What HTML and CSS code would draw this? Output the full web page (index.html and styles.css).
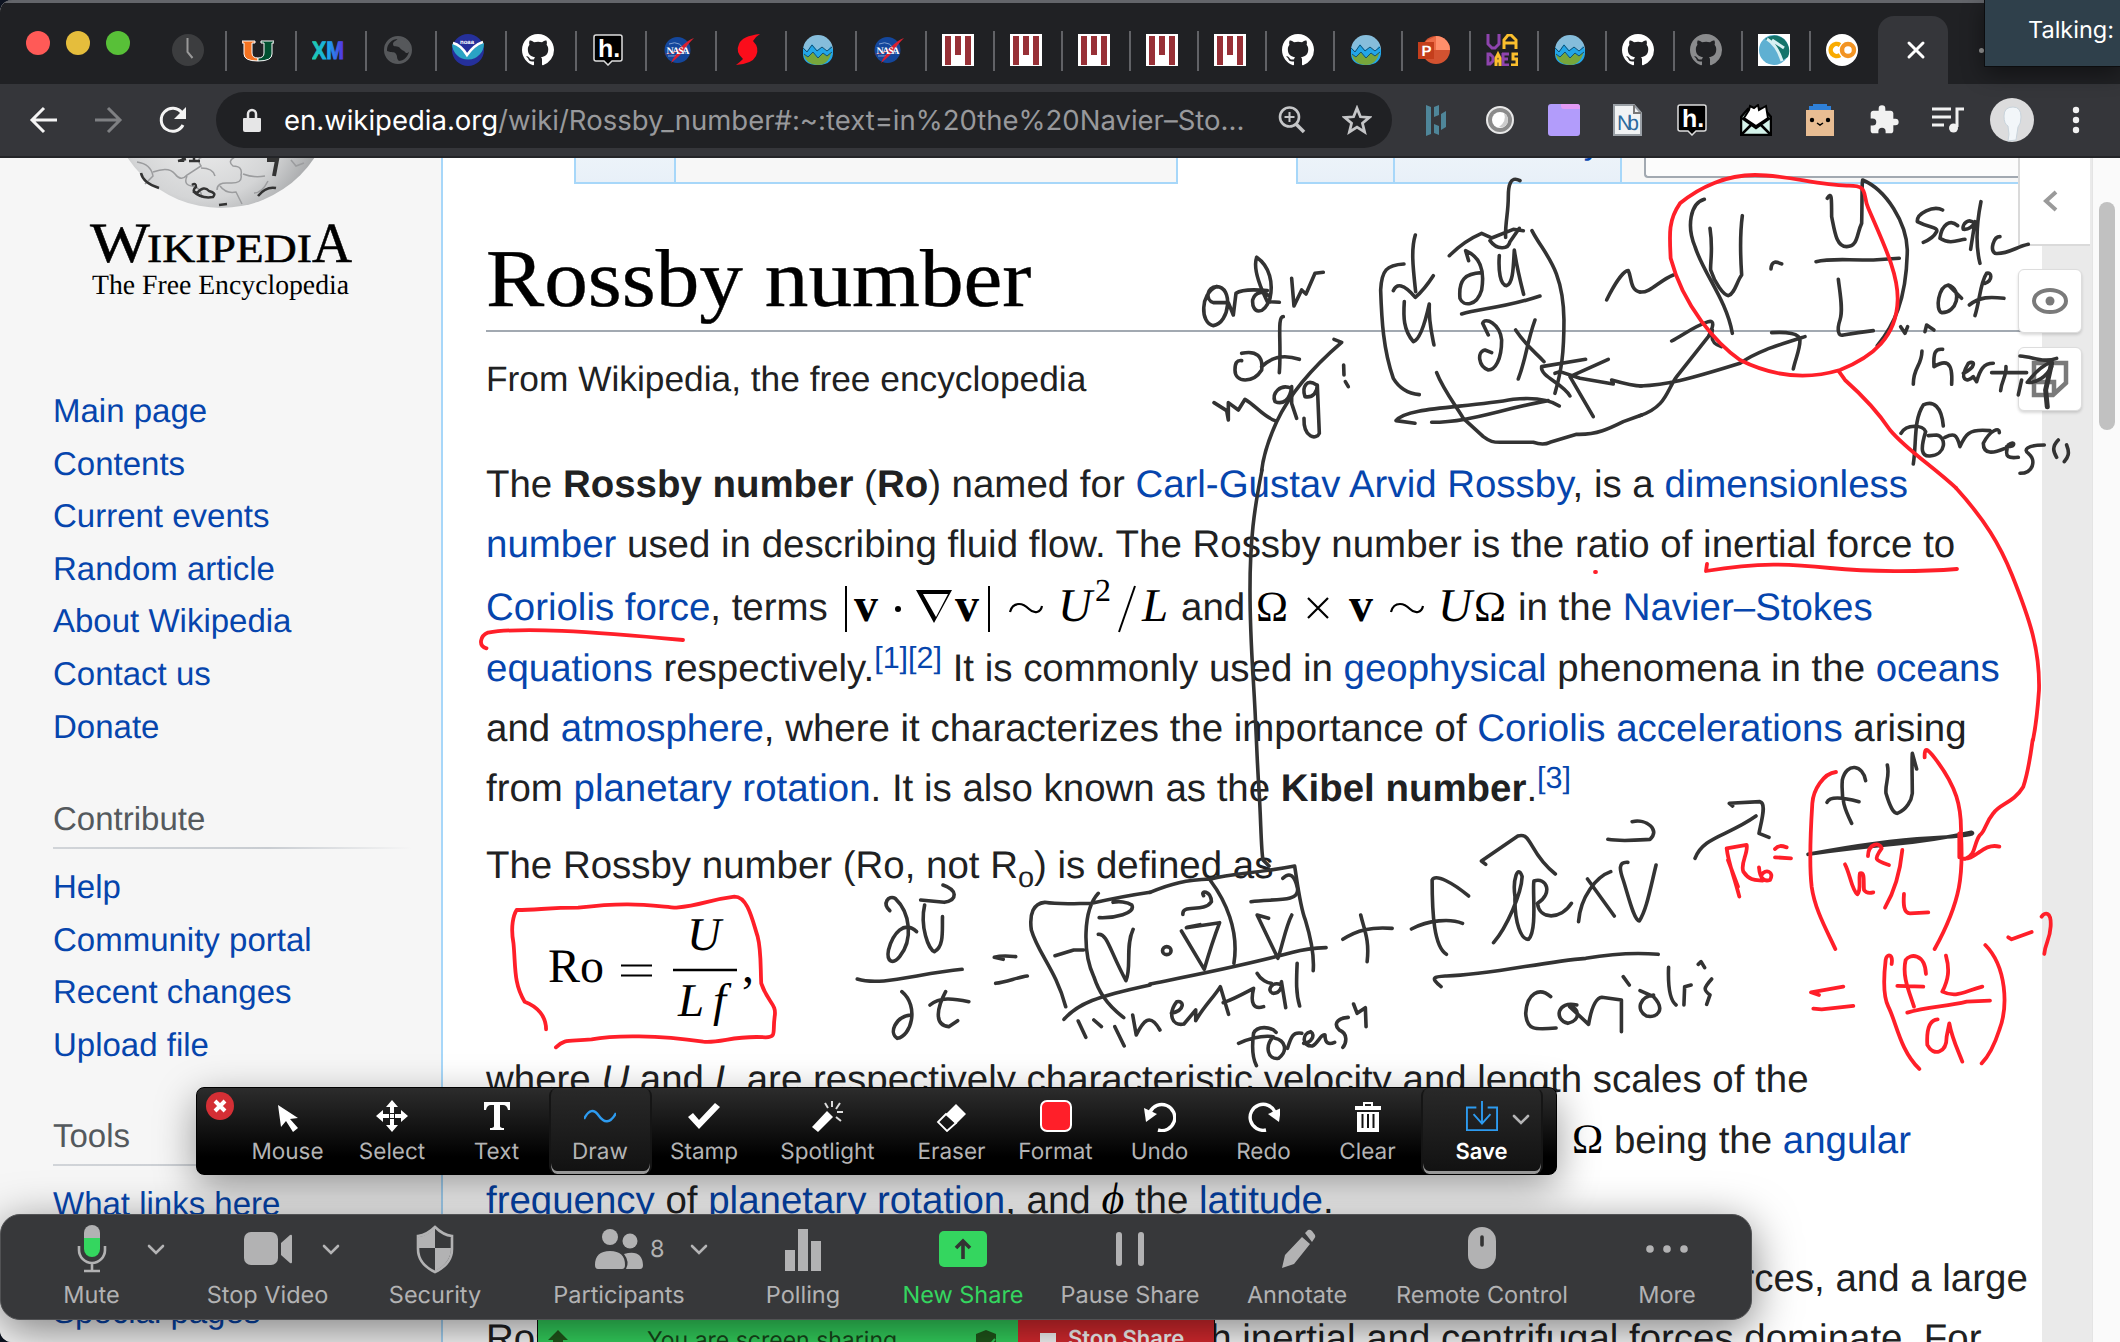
FILE: index.html
```html
<!DOCTYPE html>
<html lang="en">
<head>
<meta charset="utf-8">
<title>Rossby number - Wikipedia</title>
<link rel="stylesheet" href="styles.css">
</head>
<body>
<svg class="defs" width="0" height="0">
  <defs>
    <symbol id="github" viewBox="0 0 16 16"><path d="M8 0C3.58 0 0 3.58 0 8c0 3.54 2.29 6.53 5.47 7.59.4.07.55-.17.55-.38 0-.19-.01-.82-.01-1.49-2.01.37-2.53-.49-2.69-.94-.09-.23-.48-.94-.82-1.13-.28-.15-.68-.52-.01-.53.63-.01 1.08.58 1.23.82.72 1.21 1.87.87 2.33.66.07-.52.28-.87.51-1.07-1.78-.2-3.64-.89-3.64-3.95 0-.87.31-1.59.82-2.15-.08-.2-.36-1.02.08-2.12 0 0 .67-.21 2.2.82.64-.18 1.32-.27 2-.27s1.36.09 2 .27c1.53-1.04 2.2-.82 2.2-.82.44 1.1.16 1.92.08 2.12.51.56.82 1.27.82 2.15 0 3.07-1.87 3.75-3.65 3.95.29.25.54.73.54 1.48 0 1.07-.01 1.93-.01 2.2 0 .21.15.46.55.38A8.01 8.01 0 0 0 16 8c0-4.42-3.58-8-8-8z"/></symbol>
    <symbol id="nasa" viewBox="0 0 32 32"><circle cx="15.500" cy="16" r="13" fill="#14479c"/><path d="M7 10q12-5 17 10M6 22q14 2 20-13" fill="none" stroke="#7f9fd0" stroke-width="1"/><path d="M2 20q10 0 17-7T32 4q-7 7-10 12T9 29q3-8 12-15Q12 21 2 20z" fill="#d9202f"/><text x="16" y="20" font-family="Liberation Serif" font-weight="bold" font-size="10" fill="#fff" text-anchor="middle" textLength="23">NASA</text></symbol>
    <symbol id="earth" viewBox="0 0 32 32"><circle cx="16" cy="16" r="15" fill="#86bddb"/><path d="M1 18V13l4 4 5-7 5 6 5-3 5 4 4-5 2 4q1 15-15 15T1 18z" fill="#22a6e8"/><path d="M1.500 20l4 3 5-5 5 6 5-5 4 3 5-4q-3 13-14 13T1.500 20z" fill="#77a63b"/><path d="M1 14l4 4 5-7 5 6 5-4 5 4 5-4M2 20l4 3 5-5 5 6 5-5 4 3 5-4" fill="none" stroke="#17506f" stroke-width="1"/></symbol>
    <symbol id="miami" viewBox="0 0 32 32"><path d="M0 0h32v32H0z" fill="#fff"/><path d="M3 2h6v29H3zM13 2h6v19h-6zM23 2h6v29h-6z" fill="#983036"/></symbol>
    <symbol id="hyp" viewBox="0 0 32 32"><path d="M4 1h24q2 0 2 2v22q0 2-2 2h-8l-4 4-4-4H4q-2 0-2-2V3q0-2 2-2z" fill="#000" stroke="#ddd" stroke-width="1.500"/><text x="6" y="23" font-family="Liberation Sans" font-weight="bold" font-size="25" fill="#fff">h.</text></symbol>
    <symbol id="chev" viewBox="0 0 20 14"><path d="M3 3l7 7 7-7" fill="none" stroke="#b4b4b5" stroke-width="2.600" stroke-linecap="round"/></symbol>
  </defs>
</svg>

<div class="window">
  <header class="tabs">
    <div class="lights"><i class="red"></i><i class="yellow"></i><i class="green"></i></div>
    <div class="tab"><svg viewBox="0 0 32 32"><circle cx="16" cy="16" r="16" fill="#3c3d3f"/><path d="M15.500 4v14l5 6" fill="none" stroke="#999" stroke-width="2"/></svg></div>
    <div class="tab"><svg viewBox="0 0 32 32"><path d="M0 7h13v2h-3v10q0 5 6 5v3Q2 27 2 20V9H0z" fill="#f47321" stroke="#fff" stroke-width="1"/><path d="M19 7h13v2h-2v11q0 7-14 7v-3q6 0 6-5V9h-3z" fill="#005030" stroke="#fff" stroke-width="1"/></svg></div>
    <div class="tab"><svg viewBox="0 0 32 32"><linearGradient id="xm"><stop stop-color="#1fcfa9"/><stop offset=".5" stop-color="#18a8ef"/><stop offset="1" stop-color="#5a2be0"/></linearGradient><text x="0" y="25" textLength="32" lengthAdjust="spacingAndGlyphs" font-family="Liberation Sans" font-weight="bold" font-size="25" fill="url(#xm)" stroke="url(#xm)">XM</text></svg></div>
    <div class="tab"><svg viewBox="0 0 32 32"><circle cx="16" cy="16" r="12.500" fill="none" stroke="#56585b" stroke-width="3"/><path d="M5 17c5 2 7 0 9 3s0 4 3 7h-4Q5 25 4 17zM16 4c-1 3-5 3-5 6 0 4 5 1 7 4s4 2 5 4 3 1 5-1q0-12-12-13z" fill="#56585b"/></svg></div>
    <div class="tab"><svg viewBox="0 0 32 32"><circle cx="16" cy="16" r="16" fill="#25309b"/><path d="M0 10q8 0 15 12Q24 11 32 9a16 16 0 1 1-32 1z" fill="#2aa3c4"/><path d="M1 9q8 2 14 12Q22 11 31 8" fill="none" stroke="#fff" stroke-width="2.500"/><text x="8" y="10" font-size="6" font-family="Liberation Sans" fill="#fff" font-weight="bold">noaa</text></svg></div>
    <div class="tab"><svg fill="#fff"><use href="#github"/></svg></div>
    <div class="tab"><svg><use href="#hyp"/></svg></div>
    <div class="tab"><svg><use href="#nasa"/></svg></div>
    <div class="tab"><svg viewBox="0 0 32 32"><path d="M28 0Q10 2 7 10q-4 8 4 15-3 3-7 6 16-1 20-9 4-8-3-15 2-4 7-7z" fill="#fb0d1b"/></svg></div>
    <div class="tab"><svg><use href="#earth"/></svg></div>
    <div class="tab"><svg><use href="#nasa"/></svg></div>
    <div class="tab slim"><svg><use href="#miami"/></svg></div>
    <div class="tab slim"><svg><use href="#miami"/></svg></div>
    <div class="tab slim"><svg><use href="#miami"/></svg></div>
    <div class="tab slim"><svg><use href="#miami"/></svg></div>
    <div class="tab slim"><svg><use href="#miami"/></svg></div>
    <div class="tab slim"><svg fill="#fff"><use href="#github"/></svg></div>
    <div class="tab slim"><svg><use href="#earth"/></svg></div>
    <div class="tab slim"><svg viewBox="0 0 32 32"><circle cx="18" cy="16" r="14" fill="#d35230"/><path d="M18 2a14 14 0 0 1 14 14H18z" fill="#ff8f6b"/><path d="M18 2v14H8V7z" fill="#ed6c47"/><path d="M0 8h16v17H0z" fill="#c43e1c"/><text x="3.500" y="22" font-size="15" font-weight="bold" font-family="Liberation Sans" fill="#fff">P</text></svg></div>
    <div class="tab slim"><svg viewBox="0 0 32 32" fill="none" stroke-width="3"><path d="M2 0v10l4 4h3l4-4V0M2 20v10h2l3-3v-4l-3-3zM16 20h7M17 19v12h6M16 25h6" stroke="#8e44ad"/><path d="M18 15V6l4-5h3l5 5v9M18 9h12M10 32V24l2-4 2 4v8M10 27h4M32 20h-5v5h4v6h-6" stroke="#fbbf2d"/></svg></div>
    <div class="tab slim"><svg><use href="#earth"/></svg></div>
    <div class="tab slim"><svg fill="#fff"><use href="#github"/></svg></div>
    <div class="tab slim"><svg fill="#8a8b8d"><use href="#github"/></svg></div>
    <div class="tab slim"><svg viewBox="0 0 32 32"><path d="M0 0h32v32H0z" fill="#fff"/><circle cx="16" cy="16" r="15" fill="#5fb0d2"/><path d="M7 5Q16-2 26 5q8 9 4 18l-5 3Q20 12 7 5z" fill="#14746b"/><path d="M9 5q10 6 15 22M14 6l12 8" stroke="#d8f0f2" stroke-width="3" fill="none"/></svg></div>
    <div class="tab slim last"><svg viewBox="0 0 32 32"><circle cx="16" cy="16" r="16" fill="#fff"/><g fill="none" stroke-width="4.500"><path d="M14 11a6 6 0 1 0 0 10" stroke="#f9ab00"/><circle cx="22" cy="16" r="6" stroke="#f29423"/></g></svg></div>
    <div class="tab active"><svg viewBox="0 0 32 32"><path d="M9 9l14 14M23 9L9 23" stroke="#fff" stroke-width="3" stroke-linecap="round"/></svg></div>
    <i class="peek"></i>
  </header>

  <div class="toolbar">
    <div class="nav">
      <svg viewBox="0 0 32 32"><path d="M29 16H5M16 4L4 16l12 12" stroke="#f4f4f4"/></svg>
      <svg viewBox="0 0 32 32"><path d="M3 16h24M16 4l12 12-12 12" stroke="#7f8083"/></svg>
      <svg viewBox="0 0 32 32"><path d="M27 21A11.500 11.500 0 1 1 26 9" stroke="#f4f4f4"/><path d="M30 3v12H18z" fill="#f4f4f4"/></svg>
    </div>
    <div class="omnibox">
      <svg class="lock" viewBox="0 0 18 24"><path d="M1 10h16q1 0 1 1v11q0 2-2 2H2q-2 0-2-2V11q0-1 1-1z" fill="#e6e6e7"/><path d="M5 11V6a4 4 0 0 1 8 0v5" fill="none" stroke="#e6e6e7" stroke-width="2.500"/></svg>
      <span class="url"><b>en.wikipedia.org</b>/wiki/Rossby_number#:~:text=in%20the%20Navier–Sto...</span>
      <svg class="mag" viewBox="0 0 28 28" fill="none" stroke="#c4c5c7"><circle cx="11.500" cy="11" r="9.500" stroke-width="2.600"/><path d="M18 18l8 8" stroke-width="3.600"/><path d="M11.500 6v10M6.500 11h10" stroke-width="2"/></svg>
      <svg class="star" viewBox="0 0 28 28"><path d="M14 3l3.200 8 8.300.6-6.400 5.400 2 8.200-7.100-4.500-7.100 4.500 2-8.200-6.400-5.400 8.300-.6z" fill="none" stroke="#c4c5c7" stroke-width="2.600"/></svg>
    </div>
    <div class="exts">
      <svg viewBox="0 0 32 32" fill="#4f8699"><path d="M6 1l5 2v27l-5 2zM14 3l5-2v10l-5 2zM14 20l5 2v9l-5-2zM21 10l5-3v16l-5 3z"/></svg>
      <svg viewBox="0 0 32 32"><circle cx="16" cy="16" r="13" fill="#8b8b8b" stroke="#e8e8e8" stroke-width="2"/><circle cx="16" cy="16" r="8" fill="#fff"/><path d="M20 9q3 8-5 14 8 1 9-6 0-6-4-8z" fill="#ccc"/></svg>
      <svg viewBox="0 0 32 32"><rect width="32" height="32" rx="3" fill="#b29cfb"/><path d="M13 0h16q3 0 3 3v2H16q-3 0-3-3z" fill="#e39af5"/></svg>
      <svg viewBox="0 0 32 32"><path d="M2 1h20l7 8v22H2z" fill="#f1f3f4" stroke="#9aa0a6" stroke-width="2"/><path d="M22 1v8h7" fill="none" stroke="#777" stroke-width="2"/><text x="5" y="26" font-size="21" font-family="Liberation Sans" fill="#2d6b9e" textLength="22">Nb</text></svg>
      <svg><use href="#hyp"/></svg>
      <svg viewBox="0 0 32 32"><path d="M1 13L8 5h16l7 8v18H1z" fill="#d4f3ea" stroke="#000" stroke-width="2.500"/><path d="M4 14L9 6l1-4 4 2 4-3 1 5 7-4 2 12-12 8z" fill="#fff" stroke="#000" stroke-width="2"/><path d="M2 14l14 10 14-10M2 30l10-10M30 30L20 20" fill="none" stroke="#000" stroke-width="2.500"/></svg>
      <svg viewBox="0 0 32 32"><path d="M2 6h28v26H2z" fill="#e8bd93"/><path d="M9 0h14v2h4v4H5V2h4z" fill="#2f80d8"/><circle cx="8" cy="16" r="2.200"/><circle cx="24" cy="16" r="2.200"/><path d="M13 19l3 2 3-2" fill="none" stroke="#000" stroke-width="1.500"/></svg>
      <svg viewBox="0 0 24 24"><path d="M20.500 11H19V7c0-1.100-.9-2-2-2h-4V3.500a2.500 2.500 0 0 0-5 0V5H4c-1.100 0-2 .9-2 2v3.800h1.500a2.700 2.700 0 0 1 0 5.400H2V20c0 1.100.9 2 2 2h3.800v-1.500a2.700 2.700 0 0 1 5.400 0V22H17c1.100 0 2-.9 2-2v-4h1.500a2.500 2.500 0 0 0 0-5z" fill="#f1f1f1"/></svg>
      <svg viewBox="0 0 32 32"><path d="M0 5h19M0 13h19M0 21h12" stroke="#f1f1f1" stroke-width="3"/><path d="M25 23V5h7" fill="none" stroke="#f1f1f1" stroke-width="3"/><circle cx="21.500" cy="24" r="4.500" fill="#f1f1f1"/></svg>
      <svg class="avatar" viewBox="0 0 44 44"><circle cx="22" cy="22" r="22" fill="#dcdcdd"/><path d="M14 18q0-9 9-9 8 0 8 10 0 7-3 10l-2 13-8 1q2-6 0-15-4-2-4-10z" fill="#f2f6f9" stroke="#c9d4dc"/></svg>
      <svg viewBox="0 0 32 32" fill="#f1f1f1"><circle cx="16" cy="6" r="3.200"/><circle cx="16" cy="16" r="3.200"/><circle cx="16" cy="26" r="3.200"/></svg>
    </div>
  </div>

  <div class="page">
    <aside class="side">
      <svg class="logo" width="441" height="154" viewBox="0 158 441 154">
        <defs><radialGradient id="gl" cx=".42" cy=".6" r=".6"><stop stop-color="#f4f4f4"/><stop offset=".6" stop-color="#d4d5d6"/><stop offset="1" stop-color="#929496"/></radialGradient></defs>
        <circle cx="221" cy="96" r="112" fill="url(#gl)"/>
        <g fill="none" stroke="#9b9c9e" stroke-width="1.500"><path d="M137 162q14 2 16 14l-8 8M153 172q16-6 22 2t12 1l14-9q-6-9 4-9M187 176q-4 9 5 10t10 12M201 168q12 0 14 8M217 190q0-8 12-7 14 1 12-8 2-9-8-9-6-5 2-9M243 174q10 4 22 2M220 186q6 8 16 6l6 12M268 181q-6 12-14 12M291 160l5 6 8-3"/></g>
        <g fill="none" stroke="#333" stroke-width="2.500"><path d="M178 161l8-2M183 158v4M189 161h11M194 158v3"/><path d="M267 160h10l-3 16" stroke-width="4"/><path d="M192 185q4-3 4 2-5 4 1 6 7-8 12-2 8 2 4 6-12 2-20-6M141 173q2 10 18 15M258 196q8-10 18-8M219 205l8-1"/></g>
        <g font-family="Liberation Serif" fill="#000" stroke="#000" stroke-width=".5">
          <text x="90" y="262" font-size="57" textLength="60" lengthAdjust="spacingAndGlyphs">W</text>
          <text x="147" y="262" font-size="40" textLength="165" lengthAdjust="spacingAndGlyphs">IKIPEDI</text>
          <text x="312" y="262" font-size="57" textLength="40" lengthAdjust="spacingAndGlyphs">A</text>
          <text x="92" y="294" font-size="28" textLength="257" lengthAdjust="spacingAndGlyphs" stroke="none">The Free Encyclopedia</text>
        </g>
      </svg>
      <nav class="links first"><a>Main page</a><a>Contents</a><a>Current events</a><a>Random article</a><a>About Wikipedia</a><a>Contact us</a><a>Donate</a></nav>
      <h3>Contribute</h3>
      <nav class="links"><a>Help</a><a>Community portal</a><a>Recent changes</a><a>Upload file</a></nav>
      <h3>Tools</h3>
      <nav class="links tools"><a>What links here</a><a>Special pages</a></nav>
    </aside>

    <main class="content">
      <div class="wikitabs"><i class="blue talk"></i><i class="gap"></i><i class="sel"></i><i class="blue edit"></i><i class="blue hist"><span>View history</span></i><i class="searchwrap"><span class="searchbox"></span></i></div>
      <h1><span>Rossby number</span></h1>
      <p class="sub">From Wikipedia, the free encyclopedia</p>
      <div class="para p1">
        <div>The <b>Rossby number</b> (<b>Ro</b>) named for <a>Carl-Gustav Arvid Rossby</a>, is a <a>dimensionless</a></div>
        <div><a>number</a> used in describing fluid flow. The Rossby number is the ratio of inertial force to</div>
        <div class="mathline"><span class="w1"><a>Coriolis force</a>, terms</span><svg width="337" height="60" class="mathsvg"><g><path d="M2 8v46M145 8v46" stroke="#000" stroke-width="2"/><text x="10" y="43" class="up">v</text><circle cx="54" cy="31" r="3"/><path d="M72 12h36L90 45zM79 16h25L92 39z" fill-rule="evenodd"/><text x="111" y="43" class="up">v</text><path d="M166 34q2-8 9-8 5 0 10 5 4 4 8 3 4-1 5-6" class="til"/><text x="214" y="43">U</text><text x="251" y="23" class="exp">2</text><path d="M275 54L291 8" stroke="#000" stroke-width="2"/><text x="298" y="43">L</text></g></svg><span class="w2">and</span><svg width="272" height="60" class="mathsvg"><g><text x="10" y="43" class="rm">Ω</text><path d="M62 20l20 20M82 20L62 40" stroke="#000" stroke-width="2.200"/><text x="103" y="43" class="up">v</text><path d="M145 34q2-8 9-8 5 0 10 5 4 4 8 3 4-1 5-6" class="til"/><text x="192" y="43">U</text><text x="228" y="43" class="rm">Ω</text></g></svg><span>in the <a>Navier–Stokes</a></span></div>
        <div><a>equations</a> respectively.<sup><a>[1][2]</a></sup> It is commonly used in <a>geophysical</a> phenomena in the <a>oceans</a></div>
        <div>and <a>atmosphere</a>, where it characterizes the importance of <a>Coriolis accelerations</a> arising</div>
        <div>from <a>planetary rotation</a>. It is also known as the <b>Kibel number</b>.<sup><a>[3]</a></sup></div>
      </div>
      <div class="para p2"><div>The Rossby number (Ro, not R<sub>o</sub>) is defined as</div></div>
      <svg class="formula" width="300" height="130" viewBox="530 905 300 130"><g class="mathsvg"><text x="548" y="983" class="ro" textLength="56" lengthAdjust="spacingAndGlyphs">Ro</text><path d="M621 966.500h31M621 976.500h31" stroke="#000" stroke-width="2"/><path d="M673 971h64" stroke="#000" stroke-width="2.600"/><text x="687" y="951">U</text><text x="678" y="1017">L</text><text x="713" y="1017">f</text><text x="742" y="983" class="ro">,</text></g></svg>
      <div class="para p3">
        <div>where <i>U</i> and <i>L</i> are respectively characteristic velocity and length scales of the</div>
        <div class="cut"><span class="om">Ω</span> being the <a>angular</a></div>
        <div><a>frequency</a> of <a>planetary rotation</a>, and <em>ϕ</em> the <a>latitude</a>.</div>
      </div>
      <div class="para p4">
        <div>A small Rossby number indicates a system strongly affected by Coriolis forces, and a large</div>
        <div>Rossby number indicates a system in which inertial and centrifugal forces dominate. For</div>
      </div>
    </main>
    <div class="scroll"><i></i></div>
  </div>
</div>

<div class="rail">
  <div class="fold"><svg viewBox="0 0 24 24" width="24" height="24"><path d="M17 3L7 12l10 9" fill="none" stroke="#9a9a9a" stroke-width="4"/></svg></div>
  <div class="rbtn"><svg width="38" height="28"><ellipse cx="19" cy="14" rx="16" ry="11" fill="none" stroke="#7a7a7a" stroke-width="4"/><circle cx="19" cy="14" r="4.500" fill="#7a7a7a"/></svg></div>
  <div class="rbtn"><svg width="38" height="38"><path d="M3 3h32v20L22 35H3zM3 22h20v12" fill="none" stroke="#7a7a7a" stroke-width="4.500"/></svg></div>
</div>

<svg class="ink" width="2120" height="1342">
  <g class="black">
    <path d="M1262 470C1254 510 1250 540 1250 590S1253 670 1255 710S1257 760 1259 790S1261 850 1263 860l6 6"/>
    <g transform="translate(1180 170) scale(.3333)">
      <path d="M110 350C60 370 60 460 100 467C150 460 160 350 110 350C80 350 75 390 100 398L145 398L160 435L168 370Q190 355 262 362"/>
      <path d="M230 262C220 290 235 340 262 395L298 397M230 262C270 290 280 340 270 385C250 440 215 430 218 390C225 365 250 360 270 380"/>
      <path d="M335 325L342 408L365 360L378 372L405 310L430 307"/>
      <path d="M185 550C230 540 250 560 245 600C220 640 165 640 165 600C165 580 170 570 185 572M245 590C280 555 320 555 358 568M310 440C290 440 305 520 298 608"/>
      <path d="M102 698L140 722L145 750V698L175 720L195 688C225 705 250 740 285 752"/>
      <path d="M335 655C300 640 275 670 285 695C310 705 330 690 335 650V700L350 745M410 645C380 625 365 650 375 680C400 685 412 665 412 645L418 790C410 810 370 805 372 745"/>
      <path d="M491 585L492 615M496 635L505 650"/>
      <path d="M462 508L485 517C400 590 330 670 290 755C265 810 250 860 245 902"/>
      <path d="M672 282C620 285 605 300 602 360C605 450 610 540 640 625C655 650 680 670 718 674"/>
      <path d="M706 195C692 240 700 300 707 365M640 362C650 340 670 340 706 382C720 370 745 340 760 317"/>
      <path d="M673 395C670 440 670 480 700 515C720 510 735 460 748 402C745 450 755 490 762 525"/>
      <path d="M808 257C840 225 870 205 905 190L935 204L1000 178L1030 182M930 212C950 240 985 240 990 215L1018 175M1020 32C990 15 985 50 985 80C985 130 975 160 977 202"/>
      <path d="M866 272L857 242C900 260 915 300 905 360C890 410 850 410 840 385C835 330 855 310 905 308"/>
      <path d="M958 257C955 300 960 345 980 347C1000 340 1000 290 1003 240C1010 290 1020 330 1031 373M845 432C900 415 970 415 1080 378"/>
      <path d="M925 495L908 460C915 440 960 460 965 510C965 570 945 600 925 600C895 590 890 545 915 540L935 548M1007 480C1040 530 1070 550 1092 575M1065 450C1040 520 1040 560 1015 627"/>
      <path d="M1056 182C1090 250 1150 290 1152 450C1152 550 1145 600 1125 670"/>
      <path d="M1217 568L1085 590C1080 620 1150 640 1170 678M1285 568L1170 620L1240 740M1125 610L1140 605L1200 625L1300 642L1295 630C1330 640 1360 648 1385 648"/>
      <path d="M770 608C790 660 830 710 850 745L910 800C930 815 940 817 960 817H1060Q1090 827 1110 817L1190 793C1250 795 1290 775 1330 755L1385 735"/>
      <path d="M705 760L648 752C680 710 850 715 1000 688C1060 682 1110 690 1138 708M755 757C870 757 950 720 1105 692"/>
      <path d="M1280 390C1300 350 1330 300 1345 302C1355 320 1350 362 1380 366"/>
    </g>
    <g transform="translate(1640 150) scale(.3333)">
      <path d="M0 426C30 430 60 390 100 375M0 708C80 705 140 690 300 640C350 605 400 590 495 560M395 548C440 545 480 550 480 570C480 600 465 630 460 657M0 797C80 770 80 720 110 680L205 560C220 530 225 510 205 515C160 530 130 555 95 573M217 540C210 575 225 585 245 590"/>
      <path d="M193 148C150 160 140 230 165 290C190 370 260 450 277 550M210 235C220 300 210 340 212 360C225 400 250 435 265 437C285 430 290 395 305 375C300 300 300 250 307 197"/>
      <path d="M393 357C395 330 410 335 425 342M562 145C575 125 575 140 575 200C585 250 590 290 620 290C655 290 650 250 665 220C667 150 665 100 668 90C740 120 800 220 802 300C800 450 760 530 712 587"/>
      <path d="M528 335C570 325 600 330 700 330L778 325M595 388C600 430 610 480 600 510C590 540 595 560 610 555L655 548L700 542"/>
      <path d="M908 180C880 165 830 190 832 215C870 235 895 230 890 245Q880 265 850 277M953 227C930 205 905 225 900 265C930 285 955 270 975 268M1005 222C985 200 965 225 970 238C985 240 1000 230 1005 215L992 298M1023 155C1010 220 1005 280 1020 340M1080 260C1060 260 1050 300 1065 310C1100 315 1130 290 1165 283"/>
      <path d="M925 405C895 410 885 480 905 488C950 490 970 420 925 405L965 445M1035 400C1060 390 1055 365 1040 370C1020 400 1020 450 1005 497M988 465C1020 440 1050 440 1092 445"/>
      <path d="M782 530L795 550L803 530M855 545L860 525L882 540M846 603C845 650 820 650 820 703M908 598C885 595 880 610 882 650C915 630 940 630 935 703M970 670C1010 650 1005 630 985 640C955 690 980 700 1000 680L1010 695C1020 660 1030 640 1060 640M1098 650C1100 680 1085 690 1082 722M1055 668H1160M1145 690L1135 735"/>
      <path d="M1140 618C1180 620 1210 640 1250 625M1235 635C1200 650 1175 680 1162 697C1190 700 1220 680 1235 650"/>
      <path d="M1235 640L1217 720L1222 770" stroke-width="5"/>
      <path d="M910 828C905 770 880 750 850 765C820 810 830 880 820 942M783 850C800 820 850 825 857 845C840 900 845 920 870 918C920 915 920 860 890 855L865 857M915 862C940 850 950 850 960 890C975 855 985 835 1050 842M1078 848C1080 830 1050 840 1030 880C1030 915 1060 910 1095 895M1100 890C1130 890 1125 870 1105 885C1090 925 1110 925 1135 922M1213 885C1160 885 1150 900 1165 910C1190 930 1180 970 1140 970M1255 870C1235 890 1240 905 1250 922M1280 885C1290 910 1285 920 1273 935"/>
    </g>
    <g transform="translate(480 840) scale(.44643 .33333)">
      <path d="M918 212C900 190 915 165 930 175C965 220 970 300 940 350C925 375 910 365 915 330C925 280 950 240 978 275M996 195C985 260 1005 330 1018 335C1040 320 1035 270 1036 230M987 180L1040 187C1070 180 1070 150 1037 135M845 417C900 440 980 400 1080 388"/>
      <path d="M945 455C985 500 965 590 935 595C915 580 930 530 965 525M1043 455C1025 500 1015 555 1050 560L1070 542M1008 495C1030 470 1060 475 1095 485M1172 358L1152 352C1170 345 1185 348 1200 350M1155 430C1180 425 1205 412 1226 408"/>
      <path d="M1312 500C1290 390 1250 340 1235 270C1230 220 1240 190 1265 187C1300 195 1340 190 1370 190C1420 175 1460 165 1501 157M1288 347L1330 330H1352M1385 160C1350 210 1350 340 1375 410C1385 450 1400 490 1442 533M1385 283C1405 280 1410 330 1447 422C1460 380 1445 320 1463 268M1387 233C1420 235 1470 220 1460 195C1450 185 1430 183 1418 187"/>
      <path d="M1308 538C1340 490 1380 470 1501 435M1340 543L1357 592M1375 540L1392 560M1422 560L1443 618M1462 525L1470 585C1485 545 1500 515 1523 570"/>
    </g>
    <g transform="translate(1150 780) scale(.35714 .33333)">
      <path d="M0 337C60 310 100 300 170 297C230 280 300 280 405 258C410 290 420 380 435 420C455 490 460 530 457 572M170 303C210 360 250 450 235 550M92 403C90 370 150 400 172 365C170 330 140 330 150 347M102 443L195 428C180 470 165 520 152 568L88 453M104 442L140 434"/>
      <circle cx="47" cy="512" r="12"/>
      <path d="M332 415L300 405L358 535C370 500 380 440 397 405M283 365C340 355 420 370 413 325C405 285 390 275 372 295M0 612C150 580 250 560 400 517Q440 505 493 503"/>
      <path d="M60 700C100 690 95 660 75 665C50 700 60 740 95 732L128 690V722C150 680 180 650 197 620L220 703M205 668C240 655 280 630 290 625C280 670 290 690 318 680M300 580C310 600 330 610 340 610M368 615C340 600 325 635 345 640C365 640 370 620 368 605L380 683M412 550C410 600 408 640 419 678"/>
      <path d="M353 757C340 740 300 735 290 760C285 800 285 830 298 857M248 790C280 775 310 765 345 770C320 800 330 840 360 835C390 810 375 780 350 775M385 805C395 770 400 755 425 760M430 790C450 790 465 765 450 755C425 760 425 800 455 798C470 790 480 760 490 765C490 790 500 795 517 787M555 712C520 715 515 735 530 750C555 760 550 790 540 802M570 672L580 700L603 683L605 740"/>
      <path d="M590 405C600 450 615 480 608 545M540 478C580 450 620 440 678 445M892 348C850 310 800 280 790 300C790 400 795 500 830 523M732 447C780 420 840 415 875 430M940 253L928 243L1030 168C1070 155 1060 220 1135 282"/>
      <path d="M962 488C1000 440 1040 340 1042 290C1030 250 1015 300 1022 350C1020 430 1040 480 1060 478C1085 450 1070 330 1075 303C1110 290 1130 340 1085 370C1090 420 1150 420 1180 370M1225 297L1300 408M1290 275C1250 290 1205 350 1200 425M1338 247C1310 245 1315 270 1325 300C1340 350 1355 420 1370 423C1390 390 1400 330 1417 255M1282 178C1320 185 1370 180 1400 178C1430 150 1390 115 1350 125"/>
      <path d="M815 620C780 590 800 590 830 588C950 585 1100 545 1220 535C1300 520 1370 518 1423 523M1122 650C1090 620 1055 640 1052 700C1055 750 1075 750 1137 744M1195 675C1140 660 1130 720 1170 730C1210 720 1200 680 1175 680L1228 733C1235 690 1245 655 1265 652L1320 660V755M1325 590L1342 615M1372 632L1410 650C1445 690 1420 715 1390 708C1360 690 1370 650 1410 645M1452 562C1450 620 1455 660 1473 675M1495 675L1497 620L1515 615M1535 553L1543 545L1553 563"/>
    </g>
    <g transform="translate(1680 740) scale(.3333)">
      <path d="M95 717C70 745 70 750 90 765L80 793M45 355C70 290 140 290 228 228M158 198L148 190L240 185C260 190 245 240 237 280L267 292M557 122C550 75 500 65 487 120C483 180 495 210 515 250M441 187C450 165 500 175 537 185M622 75C630 110 615 130 618 160C630 200 640 220 652 220C680 210 695 180 697 160C697 110 695 70 697 40L710 87"/>
      <path d="M384 343Q600 302 750 294T874 277Q760 302 640 313T384 343z" fill="#333"/>
    </g>
  </g>
  <g class="redink">
    <path d="M1707 564l-1 7C1760 562 1790 564 1830 568S1920 572 1957 569M1595 572h1"/>
    <path d="M486.500 648.300C478 646 480 636 488 632.600C521 627 587 631 683 640"/>
    <path d="M1956 488C1985 520 2000 545 2012 575C2030 620 2040 650 2039 690Q2037 720 2033 740"/>
    <g transform="translate(1640 150) scale(.3333)"><path d="M120 160C180 110 260 75 345 75C440 75 530 105 620 107C690 105 665 130 685 175C730 280 775 370 773 450C770 560 700 620 600 660C500 690 400 680 300 630C230 580 130 470 92 325C88 250 85 210 120 160M595 662L615 690C660 730 710 780 750 840C800 900 880 950 948 1014"/></g>
    <g transform="translate(480 840) scale(.44643 .33333)"><path d="M148 568C148 530 130 500 100 485C75 430 80 380 75 310C68 260 75 225 82 210C130 210 150 203 220 203C330 185 370 195 440 203C500 195 510 180 570 170C600 170 610 240 622 290C630 330 628 380 630 430C645 490 665 490 660 530C655 580 665 590 640 592C570 585 540 610 500 605C400 585 300 585 250 598C200 605 190 595 170 622"/></g>
    <g transform="translate(1680 740) scale(.3333)">
      <path d="M178 470C160 400 145 370 140 325L200 315C205 340 180 370 190 395C210 425 230 420 248 422M144 360L174 440M237 382C240 420 255 425 270 420C285 395 255 385 245 405M285 327C295 315 305 317 320 322M285 352L333 355M468 96C430 100 400 150 397 190C390 300 388 380 395 440C405 510 440 570 466 627"/>
      <path d="M734 52C733 15 745 30 765 55C830 140 845 200 843 280C850 400 845 480 764 627M838 280V352M1058 0C1050 60 1040 110 1030 140C1000 190 960 190 940 220C915 250 915 275 900 285C880 310 890 345 855 357L845 355C870 360 885 345 900 335C920 320 940 315 958 320"/>
      <path d="M495 373C510 400 515 450 532 463C545 450 535 420 540 400C555 395 550 420 552 450Q560 462 580 457M564 348C565 310 600 305 605 325C580 360 585 360 627 375M667 330C660 400 640 460 615 503M672 462C670 490 670 520 690 520L745 517"/>
      <path d="M417 765L393 757L490 740M400 806L425 808L520 798M635 672C640 640 620 640 617 660C610 720 610 770 625 800C650 850 660 930 718 987M738 702C735 640 690 640 677 660C665 710 690 760 702 800M652 738L730 740M798 647C810 690 805 720 787 755C830 775 850 755 907 740M682 818C740 800 800 800 860 785L930 782M773 838C745 840 740 880 742 915C760 950 800 940 800 890L808 850C815 890 825 910 847 965"/>
      <path d="M916 615C980 680 985 800 958 870C945 910 925 950 905 970M985 592L995 598L1055 576M1085 530C1095 515 1115 515 1112 560C1110 600 1095 610 1093 642"/>
    </g>
  </g>
</svg>

<div class="talking">Talking:</div>

<div class="annot">
  <svg class="close" width="28" height="28"><circle cx="14" cy="14" r="14" fill="#d42f35"/><path d="M9 9l10 10M19 9L9 19" stroke="#fff" stroke-width="4"/></svg>
  <div class="a w104"><svg viewBox="0 0 32 32"><path d="M6 5l20 13-8 1 8 9-5 4-7-11-5 6z" fill="#fff"/></svg>Mouse</div>
  <div class="a w105"><svg viewBox="0 0 32 32"><path d="M16 0l6 7H10zM16 32l6-7H10zM0 16l7-6v12zM32 16l-7-6v12z" fill="#fff"/><path d="M16 5v8M16 19v8M5 16h8M19 16h8" stroke="#fff" stroke-width="4"/><path d="M14 14h4v4h-4z" fill="#fff"/></svg>Select</div>
  <div class="a w104"><svg viewBox="0 0 32 32"><path d="M3 2h26v8h-2q-1-5-5-5h-3v21q0 2 4 2v2H9v-2q4 0 4-2V5h-3q-4 0-5 5H3z" fill="#fff"/></svg>Text</div>
  <div class="a w103 on"><svg viewBox="0 0 32 32"><path d="M0 19C5 9 10 9 15 16S26 24 32 13" fill="none" stroke="#2d9bf0" stroke-width="2.400"/></svg>Draw</div>
  <div class="a w105"><svg viewBox="0 0 32 32"><path d="M0 17l5-4 6 7L27 3l5 4-21 22z" fill="#fff"/></svg>Stamp</div>
  <div class="a w142"><svg viewBox="0 0 32 32"><path d="M0 27L15 11l6 6L6 32z" fill="#fff"/><path d="M20 1v6M13 3l3 5M28 3l-4 6M25 12h6M24 17l5 4" stroke="#ddd" stroke-width="2"/></svg>Spotlight</div>
  <div class="a w106"><svg viewBox="0 0 32 32"><path d="M20 4l10 10-10 10L10 14z" fill="#fff"/><path d="M10 14L2 22l9 9 9-8z" fill="none" stroke="#fff" stroke-width="1.800"/></svg>Eraser</div>
  <div class="a w102"><svg viewBox="0 0 32 32"><rect x="1" y="1" width="30" height="30" rx="6" fill="#ff1f29" stroke="#fff" stroke-width="2"/></svg>Format</div>
  <div class="a w106"><svg viewBox="0 0 32 32"><path d="M6 12A13 13 0 1 1 14 30" fill="none" stroke="#fff" stroke-width="3.400"/><path d="M0 8l2 14 11-8z" fill="#fff"/></svg>Undo</div>
  <div class="a w102"><svg viewBox="0 0 32 32"><path d="M27 12A13 13 0 1 0 18 30" fill="none" stroke="#fff" stroke-width="3.400"/><path d="M33 8l-2 14-11-8z" fill="#fff"/></svg>Redo</div>
  <div class="a w106"><svg viewBox="0 0 32 32"><path d="M3 6h26v4H3zM11 2h10v4h-2V4h-6v2h-2zM5 12h22v20H5z" fill="#fff"/><path d="M10.500 14v14M16 14v14M21.500 14v14" stroke="#111" stroke-width="2"/></svg>Clear</div>
  <div class="a w122 on save"><svg viewBox="0 0 34 32"><path d="M11 7H1v24h32V7H23M17 0v24M8 14l9 10 9-10" fill="none" stroke="#2d9bf0" stroke-width="2"/></svg>Save<svg class="cv"><use href="#chev"/></svg></div>
</div>

<div class="sharing"><div class="sg"><svg width="20" height="22"><path d="M10 0l10 10h-5v12H5V10H0z" fill="#21591b"/></svg><span>You are screen sharing</span><svg width="20" height="24"><path d="M10 0l10 4v8q0 8-10 12Q0 20 0 12V4z" fill="#21591b"/><path d="M9 14l3 3 7-8" fill="none" stroke="#34d65f" stroke-width="2"/></svg></div><div class="sr"><i></i>Stop Share</div></div>

<div class="zoombar">
  <div class="z c1"><svg viewBox="0 0 40 52"><path d="M12 10a8 8 0 0 1 16 0v5H12z" fill="#b2b2b3"/><path d="M12 15h16v11a8 8 0 0 1-16 0z" fill="#34d65f"/><path d="M7 23v4a13 13 0 0 0 26 0v-4M20 40v8M12 48h16" fill="none" stroke="#b2b2b3" stroke-width="2.600"/></svg>Mute<svg class="cv cva"><use href="#chev"/></svg></div>
  <div class="z c2"><svg viewBox="0 0 50 52" class="wide"><rect x="1" y="9" width="34" height="33" rx="7"/><path d="M38 20l9-8q2-1 2 1v26q0 2-2 1l-9-8z"/></svg>Stop Video<svg class="cv cvb"><use href="#chev"/></svg></div>
  <div class="z c3"><svg viewBox="0 0 40 52"><path d="M20 4q8 8 17 9v13q0 15-17 23Q3 41 3 26V13q9-1 17-9z" fill="none" stroke="#b2b2b3" stroke-width="2.600"/><path d="M20 5v20H4V14q8-1 16-9zM20 25h16q0 15-16 23z"/></svg>Security</div>
  <div class="z c4"><svg viewBox="0 0 50 52" class="wide"><circle cx="16" cy="14" r="8"/><circle cx="36" cy="18" r="7.500"/><path d="M1 42q0-14 15-14t15 14q0 4-3 4H4q-3 0-3-4zM30 31q18-5 19 11 0 4-3 4H32q4-7-2-15z"/></svg>Participants<span class="cnt">8</span><svg class="cv cvc"><use href="#chev"/></svg></div>
  <div class="z c5"><svg viewBox="0 0 40 52"><path d="M2 27h10v21H2zM15 6h10v42H15zM28 18h10v30H28z"/></svg>Polling</div>
  <div class="z c6 newshare"><svg viewBox="0 0 50 52" class="wide"><rect x="1" y="8" width="48" height="36" rx="5" fill="#34d65f"/><path d="M25 36V19M18 25l7-7 7 7" fill="none" stroke="#333" stroke-width="3.600"/></svg>New Share</div>
  <div class="z c7"><svg viewBox="0 0 40 52"><rect x="6" y="9" width="6" height="34" rx="3"/><rect x="28" y="9" width="6" height="34" rx="3"/></svg>Pause Share</div>
  <div class="z c8"><svg viewBox="0 0 40 52"><path d="M25 14l8 7-16 20-12 4 3-13zM28 10l3-3q2-1 4 1l3 4q1 2-1 4l-2 3z"/></svg>Annotate</div>
  <div class="z c9"><svg viewBox="0 0 40 52"><rect x="6" y="4" width="28" height="42" rx="14"/><path d="M20 14v8" stroke="#333" stroke-width="3.600" stroke-linecap="round"/></svg>Remote Control</div>
  <div class="z c10"><svg viewBox="0 0 50 52" class="wide"><circle cx="8" cy="26" r="3.800"/><circle cx="25" cy="26" r="3.800"/><circle cx="42" cy="26" r="3.800"/></svg>More</div>
</div>
</body>
</html>
```
FILE: styles.css
```css
* { box-sizing: border-box; }
body { margin: 0; width: 2120px; height: 1342px; overflow: hidden; position: relative; background: #0d1320; font-family: "Liberation Sans", Arial, sans-serif; text-rendering: geometricPrecision; }
.defs { position: absolute; }
.window { width: 2120px; height: 1342px; display: flex; flex-direction: column; overflow: hidden; border-radius: 12px 0 0 12px; background: #fff; }

/* tab strip */
.tabs { height: 84px; flex: none; background: #202124; border-top: 3px solid #63656a; display: flex; align-items: flex-start; }
.lights { width: 157px; padding: 28px 0 0 26px; display: flex; gap: 16px; flex: none; }
.lights i { width: 24px; height: 24px; border-radius: 50%; }
.red { background: #ff5a57; } .yellow { background: #e5bd3c; } .green { background: #58c038; }
.tab { width: 70px; height: 40px; margin-top: 28px; padding: 3px 0 0 15px; border-right: 2px solid #616266; flex: none; }
.tab svg { width: 32px; height: 32px; display: block; }
.tab.slim { width: 68px; }
.tab.last { border-color: transparent; }
.tab.active { width: 70px; height: 68px; margin: 13px 0 0 -1px; padding: 18px 0 0 22px; border: 0; background: #35363a; border-radius: 16px 16px 0 0; }
.peek { width: 5px; height: 5px; background: #999; border-radius: 50%; margin: 45px 0 0 31px; }

/* toolbar */
.toolbar { height: 74px; flex: none; background: #35363a; border-bottom: 2px solid #242528; display: flex; align-items: center; }
.nav { width: 216px; padding-left: 28px; display: flex; gap: 32px; flex: none; }
.nav svg { width: 32px; height: 32px; fill: none; stroke-width: 3; }
.omnibox { width: 1176px; height: 56px; border-radius: 28px; background: #202124; display: flex; align-items: center; padding-left: 27px; flex: none; }
.lock { width: 18px; height: 24px; flex: none; }
.url { width: 975px; margin-left: 23px; font: 27.500px Inter, sans-serif; color: #98999c; white-space: nowrap; flex: none; }
.url b { font-weight: 400; color: #fff; }
.mag, .star { width: 28px; height: 28px; margin-left: 19px; flex: none; }
.star { margin-left: 36px; width: 30px; height: 30px; }
.exts { display: flex; align-items: center; padding-left: 28px; gap: 32px; }
.exts svg { width: 32px; height: 32px; flex: none; }
.exts .avatar { width: 44px; height: 44px; margin: 0 -6px; }

/* page */
.page { flex: 1; display: flex; min-height: 0; }
.side { width: 443px; flex: none; background: #f6f6f6; border-right: 2px solid #a7d7f9; overflow: hidden; }
.logo { display: block; }
.links { display: flex; flex-direction: column; padding-left: 53px; font-size: 33px; line-height: 52.600px; color: #0645ad; height: 210px; }
.links.first { margin-top: 73px; height: 369px; }
.links.tools { gap: 55px; }
a { color: #0645ad; }
.side h3 { margin: 43px 30px 12px 53px; height: 52px; font-weight: 400; font-size: 33px; line-height: 44px; color: #54595d; border-bottom: 2px solid; border-image: linear-gradient(90deg, #c8ccd1cc, #c8ccd1 60%, transparent) 1; }
.content { width: 1649px; flex: none; padding-left: 43px; overflow: hidden; color: #202122; }
.wikitabs { height: 26px; display: flex; margin-left: 88px; width: 1446px; }
.wikitabs i { height: 26px; border-right: 2px solid #a7d7f9; border-bottom: 2px solid #a7d7f9; flex: none; font-style: normal; }
.wikitabs .blue { background: linear-gradient(#ecf3f9, #e8f0f8); }
.wikitabs .talk { width: 102px; border-left: 2px solid #a7d7f9; }
.wikitabs .gap { width: 502px; background: #f7f7f7; }
.wikitabs .sel { width: 120px; background: #fff; border-bottom: 0; }
.wikitabs .edit { width: 97px; }
.wikitabs .hist { width: 227px; overflow: hidden; }
.hist span { display: block; color: #0645ad; font-size: 33px; line-height: 32px; margin: -31px 0 0 28px; white-space: nowrap; }
.wikitabs .searchwrap { width: 400px; background: #f7f7f7; border-right: 0; padding-left: 22px; }
.searchbox { display: block; height: 20px; border: 2px solid #a2a9b1; border-width: 0 0 2px 2px; border-radius: 0 0 0 4px; background: #fcfcfc; }
h1 { margin: 0; width: 1536px; height: 148px; border-bottom: 2px solid #a2a9b1; font: 400 82px/100px "Liberation Serif", serif; color: #000; padding-top: 45px; }
h1 span { display: inline-block; transform: scaleX(1.064); transform-origin: 0 0; white-space: nowrap; -webkit-text-stroke: .4px #000; }
.sub { margin: 18px 0 0; font-size: 35.300px; line-height: 60px; height: 60px; white-space: nowrap; }
.para { font-size: 38.450px; line-height: 60px; white-space: nowrap; }
.para > div { height: 60px; }
.p1 { margin-top: 45px; }
.p1 > div:nth-child(2) { margin-bottom: 3px; }
.p1 > div:nth-child(3) { margin-bottom: 1px; }
sup, sub { font-size: 30.500px; line-height: 0; position: static; vertical-align: baseline; }
sup { display: inline-block; transform: translateY(-13px); }
sub { display: inline-block; transform: translateY(9px); font-size: 29px; }
.mathline { display: flex; }
.w1 { width: 358px; } .w2 { width: 65px; }
.mathsvg { flex: none; font-family: "Liberation Serif", serif; font-style: italic; font-size: 47px; fill: #000; }
.mathsvg .up { font-weight: bold; font-style: normal; font-size: 48px; }
.mathsvg .rm { font-style: normal; font-size: 43px; }
.mathsvg .ro { font-style: normal; font-size: 48px; }
.mathsvg .exp { font-size: 32px; font-style: normal; }
.til { fill: none; stroke: #000; stroke-width: 2.200; }
.p2 { margin-top: 17px; }
.formula { display: block; margin: 8px 0 0 44px; }
.p3 { margin-top: 16px; }
.p3 > div:first-child { margin-bottom: 1px; }
.p3 .cut { padding-left: 1086px; }
.om { font: 42px/40px "Liberation Serif", serif; color: #000; }
.p3 em { font: italic 44px/40px "Liberation Serif", serif; color: #000; }
.p4 { margin-top: 18px; }
.scroll { flex: 1; background: #fafafa; padding: 44px 0 0 6px; border-left: 1px solid #e4e4e4; }
.scroll i { display: block; width: 16px; height: 228px; border-radius: 8px; background: #c1c1c1; }

/* annotation sidebar rail */
.rail { position: absolute; left: 2018px; top: 158px; width: 74px; height: 1184px; background: linear-gradient(90deg, transparent 24px, #eaeaea 24px); display: flex; flex-direction: column; }
.fold { height: 88px; width: 72px; background: #fff; border: solid #dadada; border-width: 0 0 2px 2px; display: flex; align-items: center; padding-left: 19px; }
.rbtn { width: 64px; height: 64px; margin: 23px 0 -9px 0; background: #fff; border: 1.500px solid #ddd; border-radius: 6px; box-shadow: 0 2px 3px rgba(0,0,0,.15); display: flex; align-items: center; justify-content: center; }

/* freehand drawing layer */
.ink { position: absolute; left: 0; top: 0; fill: none; stroke-linecap: round; stroke-linejoin: round; }
.ink path, .ink circle { vector-effect: non-scaling-stroke; }
.black { stroke: #333; stroke-width: 3.600px; }
.redink { stroke: #ff1f29; stroke-width: 3.800px; }

.talking { position: absolute; left: 1984px; top: 0; width: 136px; height: 67px; background: #2f404b; border: solid #0c0d0f; border-width: 0 0 1px 1px; box-shadow: 0 6px 22px rgba(0,0,0,.45); color: #fff; font: 23.500px/60px Inter, sans-serif; padding-left: 43px; white-space: nowrap; overflow: hidden; }

.annot { position: absolute; left: 196px; top: 1087px; width: 1361px; height: 88px; border-radius: 8px; background: linear-gradient(#2c2c2c, #111 50%, #000 80%); border: 1.500px solid #000; box-shadow: 0 12px 40px rgba(0,0,0,.4); display: flex; padding-left: 38.500px; }
.annot .close { position: absolute; left: 9px; top: 4px; }
.a { display: flex; flex-direction: column; align-items: center; padding-top: 12px; color: #b4b4b5; font: 22.500px/28px Inter, sans-serif; gap: 6px; flex: none; position: relative; border-radius: 8px; }
.a > svg { width: 32px; height: 32px; }
.a .cv { position: absolute; width: 20px; height: 14px; right: 10px; top: 25px; }
.a.on { background: linear-gradient(#292929, #111); box-shadow: inset 0 -3px #999; border: solid #151515; border-width: 0 2px; }
.a.save { color: #fff; font-weight: 600; font-size: 22px; }
.w102 { width: 102px; } .w103 { width: 103px; } .w104 { width: 104px; } .w105 { width: 105px; } .w106 { width: 106px; } .w122 { width: 122px; } .w142 { width: 142px; }

.sharing { position: absolute; left: 537px; top: 1318px; height: 30px; display: flex; border: 1.500px solid #111; }
.sg { width: 480px; background: #34d65f; display: flex; padding: 5px 22px 0 10px; justify-content: space-between; font: 23px/32px Inter, sans-serif; color: #17481a; }
.sg svg { margin-top: 6px; }
.sr { width: 196px; background: #dc2a2f; color: #fff; font: 600 22px/28px Inter, sans-serif; padding: 6px 0 0 22px; display: flex; gap: 12px; }
.sr i { width: 16px; height: 16px; background: #fff; margin-top: 8px; }

.zoombar { position: absolute; left: 0; top: 1214px; width: 1752px; height: 106px; border-radius: 20px; background: #37383a; border: 1.500px solid #515254; box-shadow: 0 10px 45px rgba(0,0,0,.5); display: flex; }
.z { position: relative; flex: none; display: flex; flex-direction: column; align-items: center; padding-top: 8px; gap: 6px; color: #b2b2b3; font: 23.500px/28px Inter, sans-serif; white-space: nowrap; }
.z > svg { width: 40px; height: 52px; fill: #b2b2b3; }
.z > svg.wide { width: 50px; }
.z > svg.cv { position: absolute; width: 20px; height: 14px; top: 28px; }
.z > .cva { left: 145px; } .z > .cvb { left: 139px; } .z > .cvc { left: 172px; }
.cnt { position: absolute; left: 133px; top: 20px; }
.newshare { color: #34d65f; }
.c1 { width: 181px; } .c2 { width: 171px; } .c3 { width: 164px; } .c4 { width: 204px; } .c5 { width: 164px; } .c6 { width: 156px; } .c7 { width: 178px; } .c8 { width: 156px; } .c9 { width: 214px; } .c10 { width: 156px; }
```
